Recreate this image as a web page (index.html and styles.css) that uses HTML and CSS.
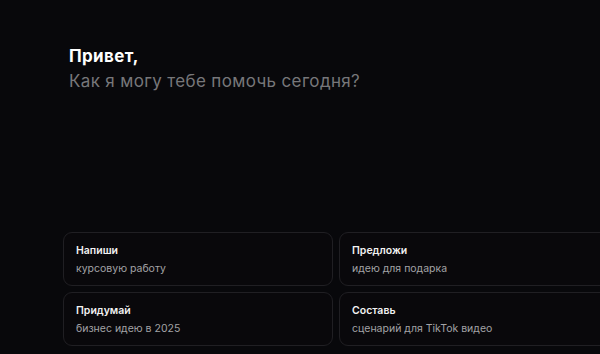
FILE: index.html
```html
<!DOCTYPE html>
<html lang="ru">
<head>
  <meta charset="UTF-8">
  <title>Чат</title>
  <link rel="stylesheet" href="styles.css">
</head>
<body>
<main class="chat">
  <div class="greeting">
    <div class="hello">Привет,</div>
    <div class="ask">Как я могу тебе помочь сегодня?</div>
  </div>
  <div class="suggestions">
    <button class="card" type="button">
      <span class="card-title">Напиши</span>
      <span class="card-text">курсовую работу</span>
    </button>
    <button class="card" type="button">
      <span class="card-title">Предложи</span>
      <span class="card-text">идею для подарка</span>
    </button>
    <button class="card" type="button">
      <span class="card-title">Придумай</span>
      <span class="card-text">бизнес идею в 2025</span>
    </button>
    <button class="card" type="button">
      <span class="card-title">Составь</span>
      <span class="card-text">сценарий для TikTok видео</span>
    </button>
  </div>
</main>
</body>
</html>
```

FILE: styles.css
```css
html, body {
  height: 100%;
}

body {
  margin: 0;
  background: #08080b;
  color: #fff;
  font-family: Inter, 'Noto Sans', sans-serif;
  overflow: hidden;
}

.chat {
  padding: 44px 0 0 63px;
}

.greeting {
  padding-left: 6px;
  font-size: 17px;
  line-height: 25px;
  letter-spacing: 0.35px;
}

.hello {
  font-weight: 700;
  color: #fff;
}

.ask {
  color: #77777a;
}

.suggestions {
  margin-top: 138px;
  display: grid;
  grid-template-columns: 270px 270px;
  gap: 6px;
  width: 546px;
}

.card {
  display: flex;
  flex-direction: column;
  align-items: flex-start;
  height: 54px;
  padding: 9px 12px 0;
  background: #09080b;
  border: 1px solid #201f23;
  border-radius: 9px;
  font-family: inherit;
  text-align: left;
  cursor: pointer;
  -webkit-appearance: none;
  appearance: none;
}

.card-title {
  font-size: 10.5px;
  line-height: 18px;
  font-weight: 600;
  color: #f2f2f2;
}

.card-text {
  font-size: 10.5px;
  line-height: 18px;
  color: #a3a3a6;
}
```
